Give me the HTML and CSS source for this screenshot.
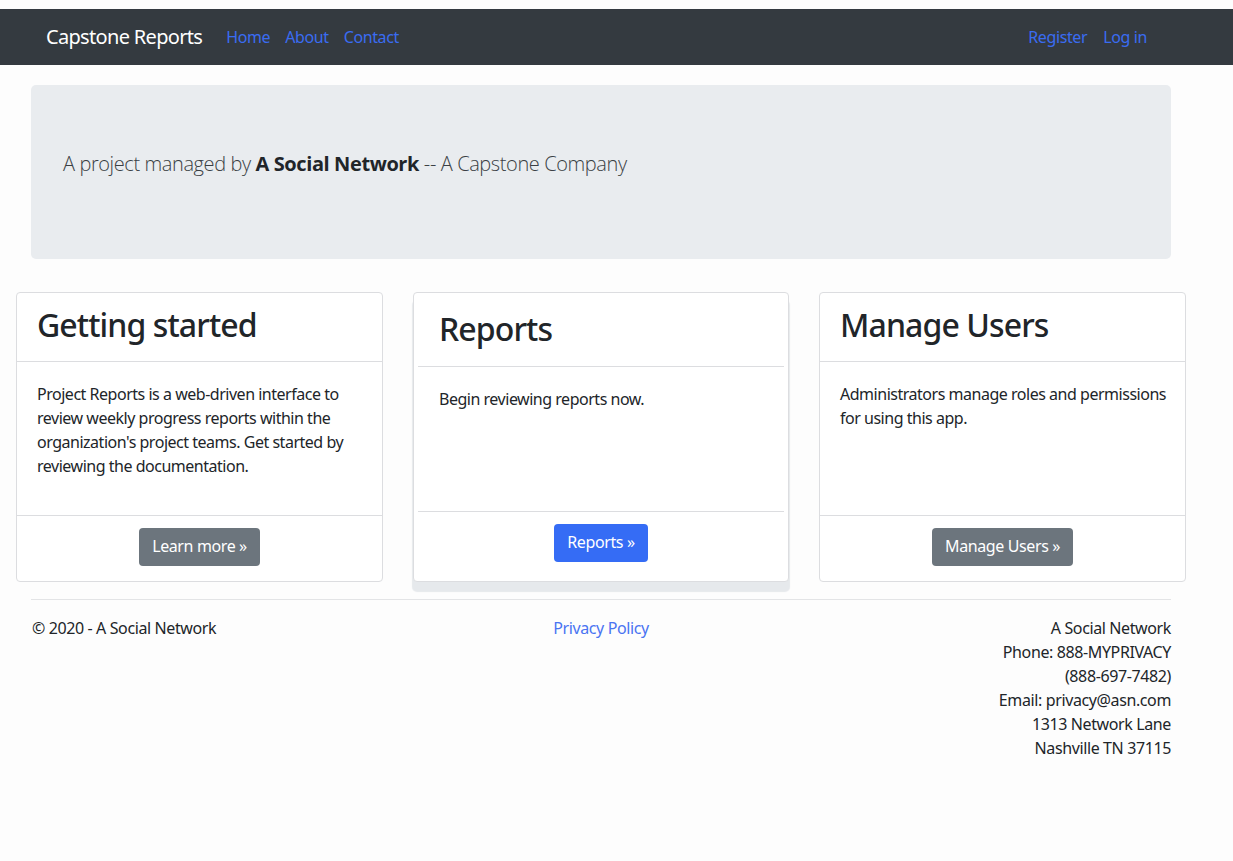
FILE: index.html
```html
<!DOCTYPE html>
<html lang="en">
<head>
<meta charset="utf-8">
<title>Capstone Reports</title>
<link rel="stylesheet" href="styles.css">
</head>
<body>
<header class="topbar">
  <nav class="navbar">
    <a class="brand" href="#">Capstone Reports</a>
    <ul class="nav-left">
      <li><a href="#">Home</a></li>
      <li><a href="#">About</a></li>
      <li><a href="#">Contact</a></li>
    </ul>
    <ul class="nav-right">
      <li><a href="#">Register</a></li>
      <li><a href="#">Log in</a></li>
    </ul>
  </nav>
</header>

<main class="main">
  <section class="jumbotron">
    <p class="lead">A project managed by <strong>A Social Network</strong> -- A Capstone Company</p>
  </section>

  <section class="cards">
    <article class="card">
      <div class="card-head"><h2>Getting started</h2></div>
      <div class="card-body"><p>Project Reports is a web-driven interface to review weekly progress reports within the organization's project teams. Get started by reviewing the documentation.</p></div>
      <div class="card-foot"><a class="btn btn-secondary" href="#">Learn more &raquo;</a></div>
    </article>
    <article class="card card-raised">
      <div class="card-head"><h2>Reports</h2></div>
      <div class="card-body"><p>Begin reviewing reports now.</p></div>
      <div class="card-foot"><a class="btn btn-primary" href="#">Reports &raquo;</a></div>
    </article>
    <article class="card">
      <div class="card-head"><h2>Manage Users</h2></div>
      <div class="card-body"><p>Administrators manage roles and permissions for using this app.</p></div>
      <div class="card-foot"><a class="btn btn-secondary" href="#">Manage Users &raquo;</a></div>
    </article>
  </section>
</main>

<footer class="footer">
  <div class="foot-left">&copy; 2020 - A Social Network</div>
  <div class="foot-center"><a href="#">Privacy Policy</a></div>
  <address class="foot-right">
    A Social Network<br>
    Phone: 888-MYPRIVACY<br>
    (888-697-7482)<br>
    Email: privacy@asn.com<br>
    1313 Network Lane<br>
    Nashville TN 37115
  </address>
</footer>
</body>
</html>
```

FILE: styles.css
```css
* { box-sizing: border-box; }

html, body {
  margin: 0;
  padding: 0;
}

body {
  background: #fdfdfd;
  color: #212529;
  font-family: "Noto Sans", "Open Sans", sans-serif;
  font-size: 16px;
  line-height: 24px;
  letter-spacing: -0.024em;
  padding-top: 9px;
}

a { text-decoration: none; }

.navbar {
  background: #343a40;
  height: 56px;
  display: flex;
  align-items: center;
  padding: 0 86px 0 46px;
}

.brand {
  color: #fff;
  font-size: 20px;
  line-height: 30px;
  letter-spacing: -0.034em;
  margin-right: 24px;
}

.nav-left, .nav-right {
  list-style: none;
  margin: 0;
  padding: 0;
  display: flex;
  gap: 15px;
}

.nav-right { margin-left: auto; gap: 16px; }

.nav-left a, .nav-right a {
  color: #3a6cf2;
  font-size: 16px;
}

.main {
  padding: 20px 0 0 0;
}

.jumbotron {
  margin: 0 0 0 31px;
  width: 1140px;
  background: #e9ecef;
  border-radius: 5px;
  padding: 64px 32px;
}

.lead {
  margin: 0 0 16px 0;
  font-family: "Open Sans", "Noto Sans", sans-serif;
  font-size: 20px;
  line-height: 30px;
  font-weight: 300;
  letter-spacing: -0.02em;
  color: #3a3f44;
}

.lead strong { font-weight: 700; color: #212529; }

.cards {
  display: grid;
  grid-template-columns: 367px 376px 367px;
  column-gap: 30px;
  margin: 33px 0 0 16px;
  align-items: stretch;
  height: 290px;
}

.card {
  border: 1px solid #dcdde0;
  border-radius: 4px;
  background: #fff;
  display: flex;
  flex-direction: column;
}

.card-head {
  padding: 13px 20px 17px;
  border-bottom: 1px solid #dcdde0;
}

.card-head h2 {
  margin: 0;
  font-size: 32px;
  line-height: 38px;
  font-weight: 500;
  letter-spacing: -0.028em;
  color: #212529;
}

.card-body {
  flex: 1;
  padding: 20px 16px 0 20px;
}

.card-body p {
  margin: 0;
  letter-spacing: -0.03em;
}

.card-foot {
  border-top: 1px solid #dcdde0;
  padding: 12px 20px 15px;
  text-align: center;
}

.card-raised {
  padding: 0 4px;
  box-shadow: 0 9px 1px 1px #e6e9ec;
}

.card-raised .card-head { padding: 17px 21px 18px; }
.card-raised .card-body { padding: 20px 21px 0; }
.card-raised .card-foot { padding: 12px 20px 19px; }

.btn {
  display: inline-block;
  height: 38px;
  padding: 6px 13px;
  border-radius: 4px;
  color: #fff;
  font-size: 16px;
  line-height: 24px;
}

.btn-secondary { background: #6c757d; }
.btn-primary { background: #356cf5; }

.footer {
  margin: 17px 0 0 31px;
  width: 1140px;
  border-top: 1px solid #e3e4e6;
  padding-top: 16px;
  display: grid;
  grid-template-columns: 1fr 1fr 1fr;
}

.foot-left { padding-left: 1px; }

.foot-center { text-align: center; }

.foot-center a { color: #4a74f2; }

.foot-right {
  text-align: right;
  font-style: normal;
}
```
